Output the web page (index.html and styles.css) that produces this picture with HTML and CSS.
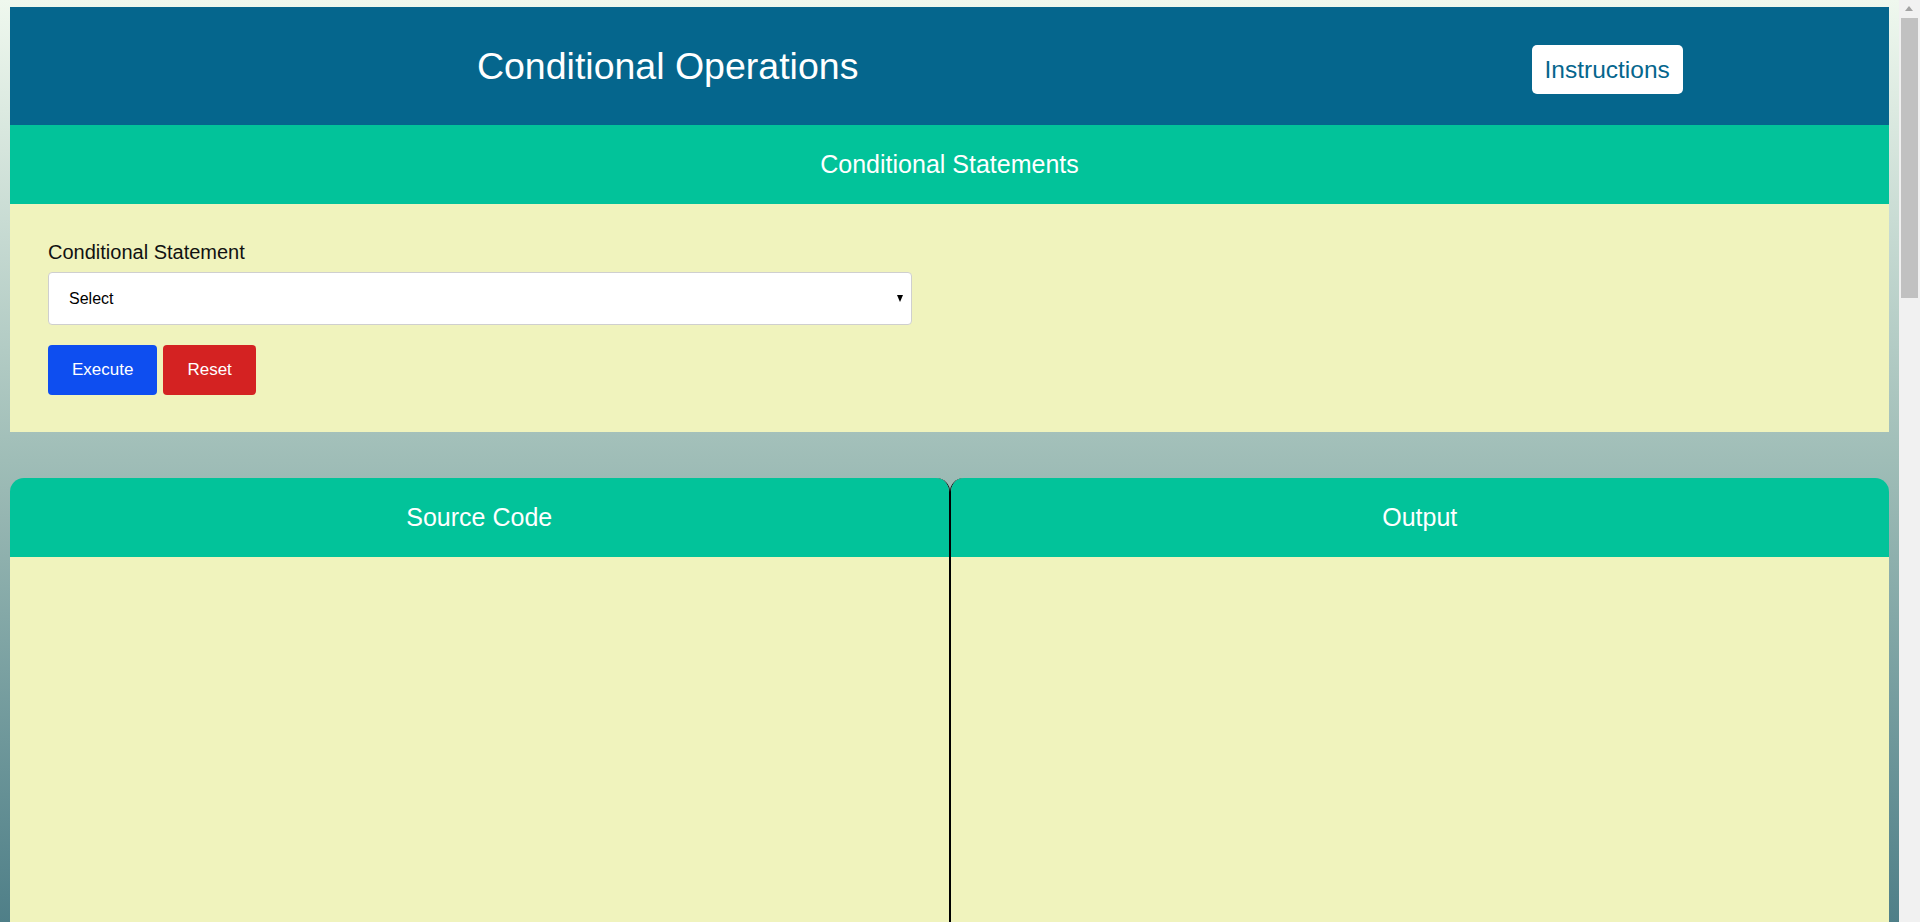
FILE: index.html
```html
<!DOCTYPE html>
<html lang="en">
<head>
<meta charset="utf-8">
<title>Conditional Operations</title>
<link rel="stylesheet" href="styles.css">
</head>
<body>
<div class="page">
  <header class="topbar">
    <div class="title-col"><h1 class="title">Conditional Operations</h1></div>
    <div class="btn-col"><button class="instr-btn">Instructions</button></div>
  </header>
  <div class="band">Conditional Statements</div>
  <section class="form-panel">
    <label class="field-label" for="cond">Conditional Statement</label>
    <div class="select-wrap">
      <select id="cond" class="select">
        <option>Select</option>
        <option>if</option>
        <option>if-else</option>
        <option>else-if ladder</option>
        <option>switch</option>
      </select>
    </div>
    <div class="actions">
      <button class="btn btn-exec">Execute</button>
      <button class="btn btn-reset">Reset</button>
    </div>
  </section>
  <section class="panes">
    <div class="pane pane-left">
      <div class="pane-head">Source Code</div>
      <div class="pane-body"></div>
    </div>
    <div class="pane pane-right">
      <div class="pane-head">Output</div>
      <div class="pane-body"></div>
    </div>
  </section>
</div>
<div class="fake-scrollbar" aria-hidden="true">
  <div class="sb-arrow"></div>
  <div class="sb-thumb"></div>
</div>
</body>
</html>
```

FILE: styles.css
```css
html {
  background: linear-gradient(to bottom, #eff8ee 0%, #9fbdb7 50%, #4f7f88 100%);
  background-attachment: fixed;
}
body {
  margin: 0;
  font-family: "Liberation Sans", Arial, sans-serif;
  color: #111;
}
.page {
  padding: 7px 31px 0 10px;
}
.fake-scrollbar {
  position: fixed;
  top: 0;
  right: 0;
  bottom: 0;
  width: 21px;
  background: #f1f1f1;
}
.sb-arrow {
  position: absolute;
  top: 6px;
  left: 6px;
  border-left: 4.5px solid transparent;
  border-right: 4.5px solid transparent;
  border-bottom: 5px solid #a3a3a3;
}
.sb-thumb {
  position: absolute;
  top: 18px;
  left: 2px;
  width: 17px;
  height: 280px;
  background: #c1c1c1;
}
.topbar {
  display: flex;
  align-items: center;
  height: 118px;
  background: #05668d;
}
.title-col {
  width: 70%;
  text-align: center;
}
.title {
  margin: 0;
  font-size: 37.5px;
  font-weight: normal;
  color: #fff;
  line-height: 43px;
}
.btn-col {
  width: 30%;
  text-align: center;
  padding-top: 7px;
}
.instr-btn {
  font-family: "Liberation Sans", Arial, sans-serif;
  font-size: 24.5px;
  color: #05668d;
  background: #fff;
  border: none;
  border-radius: 5px;
  height: 49px;
  padding: 0 13px;
}
.band {
  height: 79px;
  background: #02c39a;
  color: #fff;
  font-size: 25px;
  display: flex;
  align-items: center;
  justify-content: center;
}
.form-panel {
  background: #f0f3bd;
  padding: 37px 38px 37px;
}
.field-label {
  display: block;
  font-size: 20px;
  line-height: 23px;
  margin-bottom: 8px;
  color: #111;
}
.select-wrap {
  position: relative;
  width: 864px;
}
.select-wrap::after {
  content: "";
  position: absolute;
  right: 9px;
  top: 23px;
  border-left: 3.5px solid transparent;
  border-right: 3.5px solid transparent;
  border-top: 7px solid #000;
  pointer-events: none;
}
.select {
  display: block;
  width: 100%;
  height: 53px;
  appearance: none;
  -webkit-appearance: none;
  background: #fff;
  border: 1px solid #cfcfcf;
  border-radius: 4px;
  padding: 0 20px;
  font-family: "Liberation Sans", Arial, sans-serif;
  font-size: 16px;
  color: #000;
}
.actions {
  display: flex;
  gap: 6px;
  margin-top: 20px;
}
.btn {
  height: 50px;
  padding: 0 24px;
  border: none;
  border-radius: 4px;
  color: #fff;
  font-family: "Liberation Sans", Arial, sans-serif;
  font-size: 17px;
}
.btn-exec {
  background: #0e4ef0;
}
.btn-reset {
  background: #d42222;
}
.panes {
  margin-top: 46px;
  display: grid;
  grid-template-columns: 1fr 1fr;
}
.pane {
  display: flex;
  flex-direction: column;
  border-radius: 14px 14px 0 0;
  overflow: hidden;
}
.pane-left {
  border-right: 1px solid #000;
}
.pane-right {
  border-left: 1px solid #000;
}
.pane-head {
  height: 79px;
  background: #02c39a;
  color: #fff;
  font-size: 25px;
  display: flex;
  align-items: center;
  justify-content: center;
}
.pane-body {
  height: 2350px;
  background: #f0f3bd;
}
```
